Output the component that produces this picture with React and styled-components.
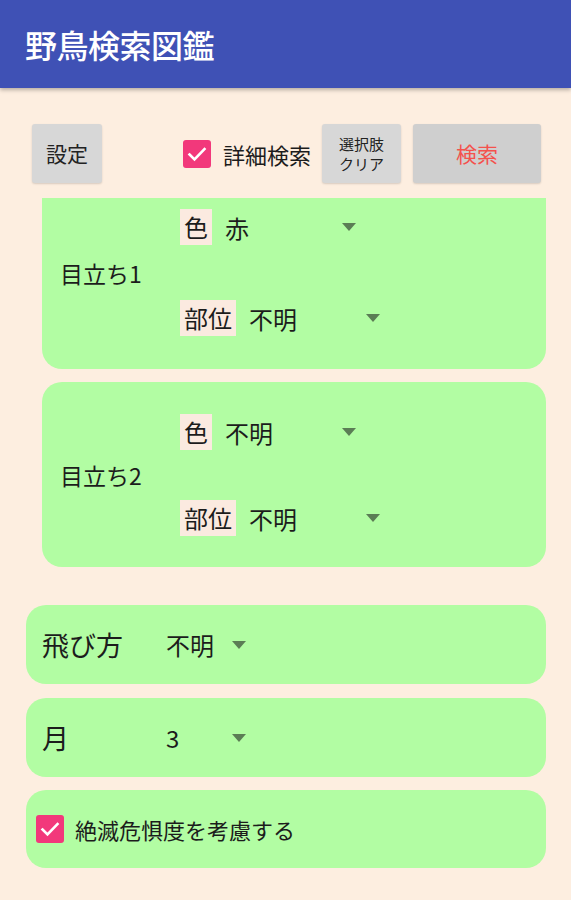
import React from "react";
import styled, { createGlobalStyle } from "styled-components";

const GlobalStyle = createGlobalStyle`
  body {
    margin: 0;
    background: #fdeee0;
    font-family: "Noto Sans CJK JP", "Noto Sans", sans-serif;
    color: #1c1c1c;
  }
`;

const Page = styled.div`
  width: 571px;
  height: 900px;
  overflow: hidden;
  background: #fdeee0;
`;

const Header = styled.header`
  height: 88px;
  background: #3f51b5;
  box-shadow: 0 2px 4px rgba(0, 0, 0, 0.28);
  display: flex;
  align-items: center;
  padding-left: 25px;
  position: relative;
  z-index: 1;
  h1 {
    margin: 0;
    font-size: 32px;
    font-weight: 500;
    color: #fff;
    letter-spacing: -0.5px;
  }
`;

const Toolbar = styled.div`
  display: flex;
  align-items: center;
  padding: 36px 30px 0 32px;
  height: 59px;
`;

const Button = styled.button`
  width: ${(p) => p.$w}px;
  height: 59px;
  margin-left: ${(p) => p.$ml || 0}px;
  border: none;
  border-radius: 3px;
  background: ${(p) => (p.$dark ? "#cfcfcf" : "#d7d7d7")};
  box-shadow: 0 1px 2px rgba(0, 0, 0, 0.15);
  font-family: inherit;
  font-size: ${(p) => p.$fs || 21}px;
  line-height: ${(p) => (p.$fs ? "20px" : "1")};
  color: ${(p) => p.$color || "#222"};
  padding: 0;
`;

const CheckLabel = styled.label`
  display: flex;
  align-items: center;
  margin-left: ${(p) => p.$ml || 0}px;
  font-size: 22px;
  gap: ${(p) => p.$gap || 12}px;
`;

const Panel = styled.div`
  margin: ${(p) => p.$mt}px 25px 0 ${(p) => p.$ml}px;
  background: #b2fda3;
  border-radius: ${(p) => (p.$cut ? "0 0 20px 20px" : "20px")};
  padding: ${(p) => p.$pt}px 0 ${(p) => p.$pb}px 18px;
  display: grid;
  grid-template-columns: 120px 1fr;
  align-items: center;
`;

const SideLabel = styled.div`
  font-size: 23px;
`;

const Selects = styled.div`
  display: flex;
  flex-direction: column;
  gap: ${(p) => p.$gap}px;
`;

const SelectRow = styled.div`
  display: flex;
  align-items: center;
  height: 36px;
`;

const Tag = styled.span`
  background: #fbeae0;
  font-size: 24px;
  line-height: 36px;
  padding: 0 4px;
  height: 36px;
`;

const Spinner = styled.div`
  display: flex;
  align-items: center;
  justify-content: space-between;
  width: ${(p) => p.$w}px;
  padding: 0 8px 0 13px;
  box-sizing: border-box;
  font-size: 24px;
`;

const Arrow = styled.span`
  width: 0;
  height: 0;
  border-left: 7px solid transparent;
  border-right: 7px solid transparent;
  border-top: 8px solid #5b7d55;
`;

const Bar = styled.div`
  margin: ${(p) => p.$mt}px 25px 0 26px;
  height: ${(p) => p.$h || 79}px;
  background: #b2fda3;
  border-radius: 20px;
  display: flex;
  align-items: center;
  padding-left: ${(p) => p.$pl || 16}px;
`;

const BarLabel = styled.div`
  width: 111px;
  font-size: 27px;
`;

function CheckBox() {
  return (
    <svg width="28" height="28" viewBox="0 0 28 28">
      <rect x="0" y="0" width="28" height="28" rx="3" fill="#f2387b" />
      <polyline
        points="6.5,14.5 11.5,19.5 21.5,9"
        fill="none"
        stroke="#fff"
        strokeWidth="2.6"
        strokeLinecap="square"
      />
    </svg>
  );
}

function Select({ tag, value }) {
  return (
    <SelectRow>
      <Tag>{tag}</Tag>
      <Spinner $w={152}>
        <span>{value}</span>
        <Arrow />
      </Spinner>
    </SelectRow>
  );
}

function Feature({ name, color, part, ...rest }) {
  return (
    <Panel {...rest}>
      <SideLabel>{name}</SideLabel>
      <Selects $gap={rest.$gap}>
        <Select tag="色" value={color} />
        <Select tag="部位" value={part} />
      </Selects>
    </Panel>
  );
}

export default function App() {
  return (
    <Page>
      <GlobalStyle />
      <Header>
        <h1>野鳥検索図鑑</h1>
      </Header>
      <Toolbar>
        <Button $w={70}>設定</Button>
        <CheckLabel $ml={81}>
          <CheckBox />
          詳細検索
        </CheckLabel>
        <Button $w={79} $ml={11} $fs={15}>
          選択肢
          <br />
          クリア
        </Button>
        <Button $w={128} $ml={12} $dark $color="#f4524d">
          検索
        </Button>
      </Toolbar>
      <Feature name="目立ち1" color="赤" part="不明" $cut $mt={15} $ml={42} $pt={11} $pb={33} $gap={55} />
      <Feature name="目立ち2" color="不明" part="不明" $mt={13} $ml={42} $pt={32} $pb={31} $gap={50} />
      <Bar $mt={38}>
        <BarLabel>飛び方</BarLabel>
        <Spinner $w={101}>
          <span>不明</span>
          <Arrow />
        </Spinner>
      </Bar>
      <Bar $mt={14}>
        <BarLabel>月</BarLabel>
        <Spinner $w={101}>
          <span>3</span>
          <Arrow />
        </Spinner>
      </Bar>
      <Bar $mt={13} $h={78} $pl={10}>
        <CheckLabel $gap={11}>
          <CheckBox />
          絶滅危惧度を考慮する
        </CheckLabel>
      </Bar>
    </Page>
  );
}
